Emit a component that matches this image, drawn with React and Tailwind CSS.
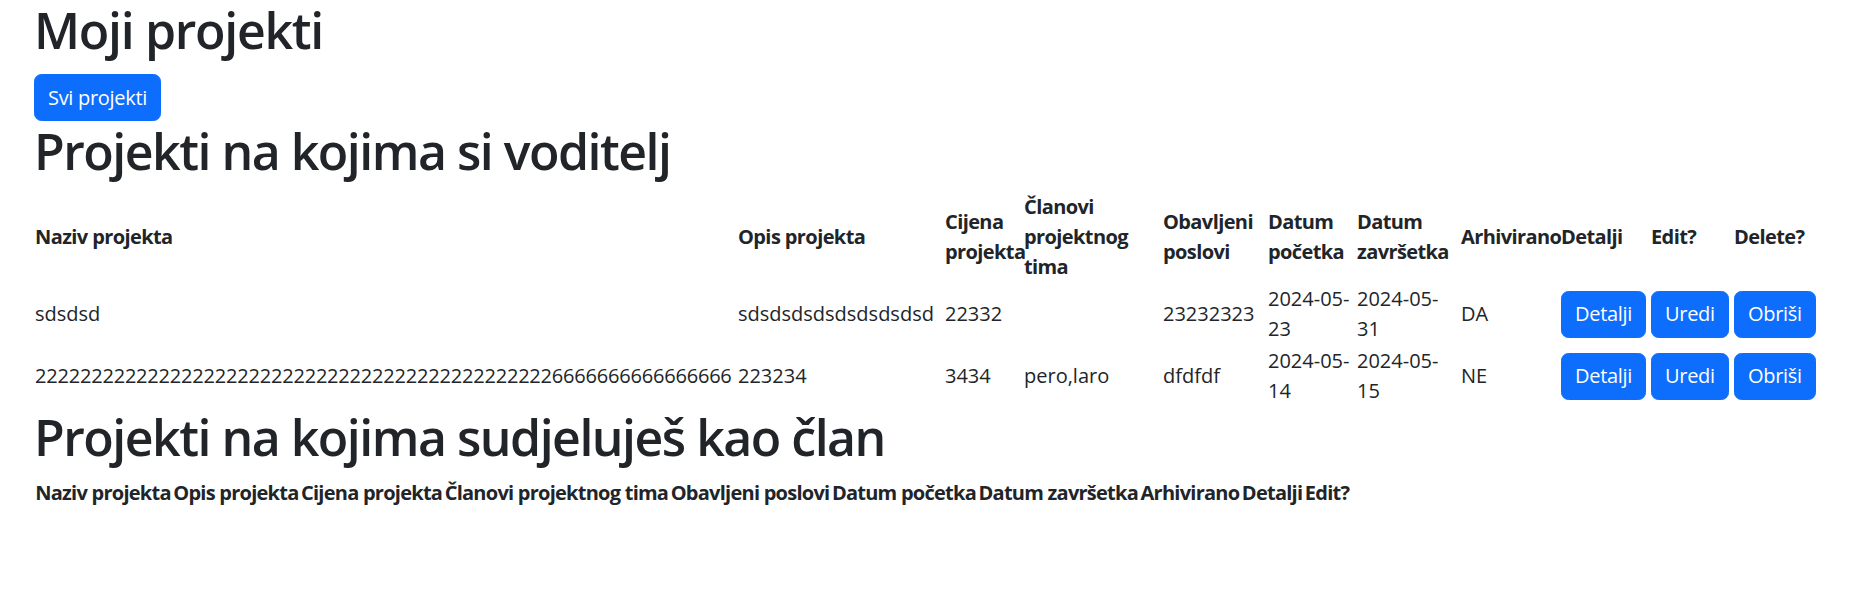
import React from 'react';

const cols = [703, 207, 79, 139, 105, 89, 104, 100, 90, 83, 86];

const headers = [
  'Naziv projekta',
  'Opis projekta',
  'Cijena projekta',
  'Članovi projektnog tima',
  'Obavljeni poslovi',
  'Datum početka',
  'Datum završetka',
  'Arhivirano',
  'Detalji',
  'Edit?',
  'Delete?',
];

const rows = [
  {
    naziv: 'sdsdsd',
    opis: 'sdsdsdsdsdsdsdsdsd',
    cijena: '22332',
    clanovi: '',
    poslovi: '23232323',
    pocetak: '2024-05-23',
    kraj: '2024-05-31',
    arhiva: 'DA',
  },
  {
    naziv: '2'.repeat(46) + '6'.repeat(16),
    opis: '223234',
    cijena: '3434',
    clanovi: 'pero,laro',
    poslovi: 'dfdfdf',
    pocetak: '2024-05-14',
    kraj: '2024-05-15',
    arhiva: 'NE',
  },
];

function Btn({ children }) {
  return (
    <button className="inline-block bg-[#0d6efd] border-[1.25px] border-[#0d6efd] text-white rounded-[7.5px] px-[13px] py-[7.5px] text-[20px] leading-[30px] tracking-[-0.3px]">
      {children}
    </button>
  );
}

export default function App() {
  return (
    <div className="px-[34px] font-['Open_Sans',sans-serif] text-[20px] leading-[30px] text-[#212529] bg-white min-h-screen">
      <h1 className="text-[50px] leading-[60px] font-semibold tracking-[-1.3px] mb-[14px]">Moji projekti</h1>
      <Btn>Svi projekti</Btn>
      <h1 className="text-[50px] leading-[60px] font-semibold tracking-[-1.5px] mb-[10px]">
        Projekti na kojima si voditelj
      </h1>

      {/* voditelj table */}
      <table className="table-fixed w-full border-collapse">
        <colgroup>
          {cols.map((w, i) => (
            <col key={i} width={w} />
          ))}
        </colgroup>
        <thead>
          <tr>
            {headers.map((h) => (
              <th key={h} className="p-px text-left align-middle font-bold tracking-[-0.6px]">
                {h}
              </th>
            ))}
          </tr>
        </thead>
        <tbody>
          {rows.map((r, i) => (
            <tr key={i}>
              <td className={'p-px align-middle whitespace-nowrap' + (i === 1 ? ' tracking-[-0.2px]' : '')}>{r.naziv}</td>
              <td className="p-px align-middle">{r.opis}</td>
              <td className="p-px align-middle">{r.cijena}</td>
              <td className="p-px align-middle">{r.clanovi}</td>
              <td className="p-px align-middle">{r.poslovi}</td>
              <td className="p-px align-middle">{r.pocetak}</td>
              <td className="p-px align-middle">{r.kraj}</td>
              <td className="p-px align-middle">{r.arhiva}</td>
              <td className="p-px align-middle">
                <Btn>Detalji</Btn>
              </td>
              <td className="p-px align-middle">
                <Btn>Uredi</Btn>
              </td>
              <td className="p-px align-middle">
                <Btn>Obriši</Btn>
              </td>
            </tr>
          ))}
        </tbody>
      </table>

      <h1 className="text-[50px] leading-[60px] font-semibold tracking-[-1.5px] mb-[10px]">
        Projekti na kojima sudjeluješ kao član
      </h1>
      {/* clan table, no rows */}
      <table className="border-collapse">
        <thead>
          <tr>
            {headers.slice(0, 10).map((h) => (
              <th key={h} className="px-[1.25px] py-px text-left font-bold whitespace-nowrap tracking-[-0.75px]">
                {h}
              </th>
            ))}
          </tr>
        </thead>
      </table>
    </div>
  );
}
